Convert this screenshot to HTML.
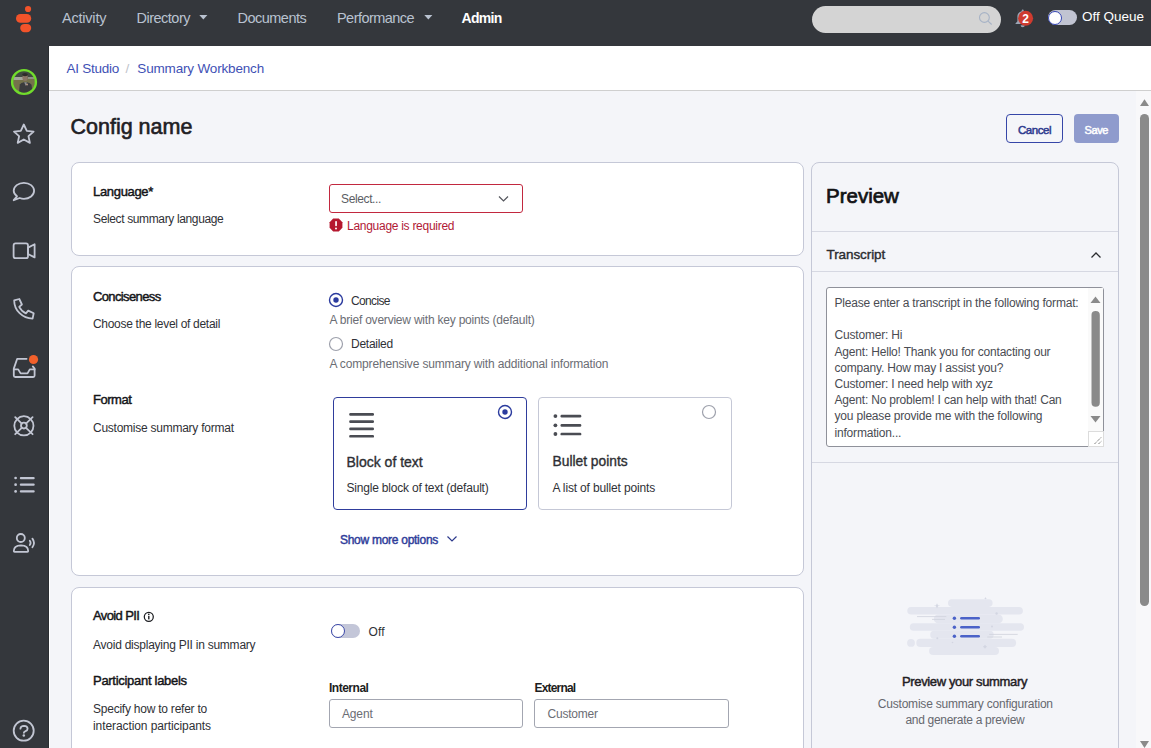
<!DOCTYPE html>
<html><head><meta charset="utf-8">
<style>
*{box-sizing:border-box;margin:0;padding:0}
html,body{width:1151px;height:748px;overflow:hidden;background:#f4f5f9;font-family:"Liberation Sans",sans-serif;color:#2e2f33}
.a{position:absolute}
.t{position:absolute;line-height:1;white-space:nowrap}
#nav{position:absolute;left:0;top:0;width:1151px;height:46px;background:#34373c}
#side{position:absolute;left:0;top:46px;width:49px;height:702px;background:#34373c}
#wcol{position:absolute;left:49px;top:91px;width:1px;height:657px;background:#fff}
.navt{position:absolute;top:11.2px;font-size:14px;color:#b9c2d0;line-height:14px;white-space:nowrap}
#crumb{position:absolute;left:49px;top:46px;width:1102px;height:45px;background:#fff;border-bottom:1px solid #cfcfcf}
.card{position:absolute;background:#fff;border:1px solid #c5c8d7;border-radius:8px}
.lbl{font-size:11.5px;font-weight:bold;color:#1d1e22}
.desc{font-size:11.5px;color:#2f3136}
.sub{font-size:11.5px;color:#6b6d74}
.radio{position:absolute;width:14px;height:14px;border-radius:50%;border:1px solid #8c8e96;background:#fff}
.radio.on{border:1.5px solid #2f3d9c}
.radio.on::after{content:"";position:absolute;left:2.5px;top:2.5px;width:6px;height:6px;border-radius:50%;background:#2f3d9c}
.inp{position:absolute;background:#fff;border:1px solid #a3a6b1;border-radius:3px}
</style></head><body>
<div id="nav">
  <svg class="a" style="left:0;top:0" width="49" height="46">
    <circle cx="28.05" cy="9" r="3.1" fill="#f2532a"/>
    <rect x="16" y="14" width="15.2" height="8.8" rx="4.4" fill="#f2532a"/>
    <rect x="20.2" y="23.9" width="11" height="8.3" rx="4.15" fill="#f2532a"/>
  </svg>
  <div class="navt" style="left:62px;font-size:14.5px;letter-spacing:-0.21px">Activity</div>
  <div class="navt" style="left:136.5px;font-size:14.5px;letter-spacing:-0.5px">Directory</div>
  <svg class="a" style="left:199px;top:14px" width="9" height="7"><path d="M0.3 1H8.4L4.35 5.6Z" fill="#b9c2d0"/></svg>
  <div class="navt" style="left:237.6px;font-size:14.5px;letter-spacing:-0.53px">Documents</div>
  <div class="navt" style="left:337px;font-size:14.5px;letter-spacing:-0.55px">Performance</div>
  <svg class="a" style="left:424px;top:14px" width="9" height="7"><path d="M0.3 1H8.4L4.35 5.6Z" fill="#b9c2d0"/></svg>
  <div class="navt" style="left:461.6px;color:#fff;font-weight:bold;font-size:14px;letter-spacing:-0.72px">Admin</div>

  <div class="a" style="left:812px;top:6px;width:189px;height:27px;border-radius:13.5px;background:#d4d4d4"></div>
  <svg class="a" style="left:975px;top:8px" width="22" height="22"><circle cx="9.4" cy="9.5" r="4.9" fill="none" stroke="#a7b3c6" stroke-width="1.1"/><path d="M13 13.2L16.7 16.5" stroke="#a7b3c6" stroke-width="1.1"/></svg>
  <svg class="a" style="left:1010px;top:6px" width="28" height="26">
    <path d="M5.2 18.1 L7.4 15.3 V11 A5.3 5.3 0 0 1 11.7 5.2 V4.6 A1 1 0 0 1 13.7 4.6 V5.2 A5.3 5.3 0 0 1 18 11 V15.3 L20.2 18.1 Z" fill="#9aa4b4"/>
    <path d="M10.6 19.2 A2.1 2.1 0 0 0 14.8 19.2 Z" fill="#9aa4b4"/>
    <circle cx="15.6" cy="12.3" r="7.5" fill="#cf3b2f"/>
    <text x="15.6" y="16.6" text-anchor="middle" font-family="Liberation Sans" font-weight="bold" font-size="12" fill="#fff">2</text>
  </svg>
  <div class="a" style="left:1048px;top:10px;width:29px;height:15px;border-radius:7.5px;background:#c1c4d2"></div>
  <div class="a" style="left:1047.5px;top:10.5px;width:14px;height:14px;border-radius:50%;background:#fff;border:1.5px solid #3646b4"></div>
  <div class="t" style="left:1082px;top:10.2px;font-size:13.5px;color:#fff">Off Queue</div>
</div>

<div id="side">
  <svg class="a" style="left:0;top:0" width="49" height="702">
    <defs><clipPath id="av"><circle cx="24" cy="36" r="11"/></clipPath></defs>
    <filter id="bl" x="-20%" y="-20%" width="140%" height="140%"><feGaussianBlur stdDeviation="0.6"/></filter>
    <g clip-path="url(#av)"><g filter="url(#bl)">
      <rect x="10" y="22" width="30" height="30" fill="#75724c"/>
      <rect x="10" y="22" width="30" height="10" fill="#3f4840"/>
      <rect x="10" y="31" width="16" height="3" fill="#a3a69c"/>
      <rect x="28" y="31" width="12" height="2" fill="#8e9284"/>
      <ellipse cx="25.1" cy="31.6" rx="2.7" ry="3.5" fill="#8a7566"/>
      <ellipse cx="25" cy="28.6" rx="2.9" ry="1.6" fill="#2e2c2a"/>
      <path d="M18.5 50 L19.8 38.5 Q21 36.6 24 36.2 L27 36.2 Q30.6 36.8 31.5 38.8 L33 50Z" fill="#3a3b3e"/>
      <path d="M24.2 36.3 L26.8 36.3 L25.8 40 Z" fill="#8f9194"/>
      <circle cx="27" cy="38.6" r="1" fill="#b89886"/>
    </g></g>
    <circle cx="24" cy="36" r="11.9" fill="none" stroke="#71dc2c" stroke-width="2.4"/>
    <g fill="none" stroke="#c2c6d3" stroke-width="1.8" stroke-linejoin="round" stroke-linecap="round">
      <!-- star -->
      <path d="M23.8 78.5 L26.8 84.9 L33.6 85.6 L28.5 90.2 L29.9 96.9 L23.8 93.5 L17.7 96.9 L19.1 90.2 L14 85.6 L20.8 84.9 Z"/>
      <!-- chat -->
      <path d="M17 150.3 C14.6 148.5 13.7 146.8 13.7 144.8 C13.7 140.4 18.3 136.8 23.9 136.8 C29.5 136.8 34.1 140.4 34.1 144.8 C34.1 149.2 29.5 152.8 23.9 152.8 C22.4 152.8 21 152.5 19.7 152 L13.7 154.2 Z"/>
      <!-- video -->
      <rect x="13.6" y="197.4" width="14.4" height="14.8" rx="2"/>
      <path d="M28 201.6 L34.6 198.2 V211.4 L28 208 Z"/>
      <!-- phone -->
      <path d="M14.2 254.4 L19.3 253 L21.9 258.5 L19.2 260.9 C20.6 263.6 23 266.1 25.9 267.4 L28.2 264.6 L33.7 267.2 L32.6 272.6 C22.5 272.4 14.2 264.4 14.2 254.4 Z"/>
      <!-- inbox -->
      <path d="M26.6 312.8 H17.2 L13.8 322.6 V329.6 Q13.8 331 15.2 331 H33.2 Q34.6 331 34.6 329.6 V322.6 L32.8 320.4"/>
      <path d="M13.8 323.4 H18.2 L20.6 327.4 H27.5 L29.8 323.4 H34.6"/>
      <!-- lifebuoy -->
      <circle cx="23.9" cy="379.8" r="9.6"/>
      <circle cx="23.9" cy="379.6" r="2.9"/>
      <path d="M15.2 371.2 L21.8 377.6 M32.6 371.2 L26 377.6 M15.2 388.2 L21.8 381.8 M32.6 388.2 L26 381.8"/>
      <!-- person voice -->
      <circle cx="20.8" cy="492" r="4"/>
      <path d="M13.8 505 Q13.8 499.4 21 499.3 Q28.2 499.4 28.2 505 Q28.2 505.8 27.4 505.8 H14.6 Q13.8 505.8 13.8 505 Z"/>
      <path d="M29.8 494.8 Q31.4 496.9 29.8 499 M32.4 492.6 Q35.6 496.9 32.4 501.3"/>
      <!-- help -->
      <circle cx="23.7" cy="684.7" r="10"/>
      <path d="M20.4 682.7 Q20.6 679.9 24 679.9 Q27.6 680 27.6 682.7 Q27.6 684.4 25.2 685.3 Q23.9 685.8 23.9 686.8"/>
    </g>
    <circle cx="23.8" cy="689.6" r="1.25" fill="#c2c6d3"/>
    <g fill="#c2c6d3">
      <circle cx="15.6" cy="432" r="1.35"/><circle cx="15.6" cy="438.7" r="1.35"/><circle cx="15.6" cy="445.4" r="1.35"/>
      <rect x="19.8" y="430.9" width="14.9" height="2.3" rx="1"/><rect x="19.8" y="437.55" width="14.9" height="2.3" rx="1"/><rect x="19.8" y="444.25" width="14.9" height="2.3" rx="1"/>
    </g>
    <circle cx="33.5" cy="313.5" r="4.6" fill="#f2602b"/>
  </svg>
  <div class="a" style="left:48px;top:0;width:1px;height:702px;background:#2b2e32"></div>
</div>

<div id="wcol"></div>
<div id="crumb">
  <div class="t" style="left:17.6px;top:15.9px;font-size:13.5px;letter-spacing:-0.25px;color:#3f51b5">AI Studio</div>
  <div class="t" style="left:76.5px;top:15.9px;font-size:13.5px;color:#c0c3cb">/</div>
  <div class="t" style="left:88.3px;top:15.9px;font-size:13.5px;letter-spacing:-0.165px;color:#3f51b5">Summary Workbench</div>
</div>

<div class="t" style="left:70.5px;top:117px;font-size:21.5px;color:#1f2024;-webkit-text-stroke:0.6px #1f2024">Config name</div>
<div class="a" style="left:1006px;top:114px;width:57px;height:29px;border:1px solid #3646a8;border-radius:4px"></div>
<div class="t" style="left:1017.9px;top:124.5px;font-size:11.5px;color:#2e3a8f;letter-spacing:-0.45px;-webkit-text-stroke:0.5px currentColor">Cancel</div>
<div class="a" style="left:1074px;top:114px;width:45px;height:29px;background:#8f9bcd;border-radius:4px"></div>
<div class="t" style="left:1084.5px;top:124.5px;font-size:11px;color:#fff;letter-spacing:-0.39px;-webkit-text-stroke:0.5px currentColor">Save</div>

<!-- card 1 -->
<div class="card" style="left:71px;top:162px;width:733px;height:94px"></div>
<div class="t" style="left:93px;top:184.9px;font-size:13px;color:#141518;letter-spacing:-0.322px;-webkit-text-stroke:0.45px currentColor">Language*</div>
<div class="t desc" style="left:93px;top:213.0px;font-size:12px;letter-spacing:-0.362px">Select summary language</div>
<div class="a" style="left:329px;top:184px;width:194px;height:28.5px;border:1.3px solid #c2283f;border-radius:3px;background:#fff"></div>
<div class="t" style="left:341px;top:193.1px;color:#5b5d64;font-size:12px;letter-spacing:-0.372px">Select...</div>
<svg class="a" style="left:498px;top:195px" width="12" height="8"><path d="M1 1.5L5.5 6L10 1.5" fill="none" stroke="#55575e" stroke-width="1.2"/></svg>
<svg class="a" style="left:329px;top:218px" width="15" height="15"><path d="M4.2 0.6H9.8L13.4 4.2V9.8L9.8 13.4H4.2L0.6 9.8V4.2Z" fill="#b5182f"/><rect x="6.2" y="3" width="1.7" height="5.2" rx="0.8" fill="#fff"/><circle cx="7" cy="10.4" r="1" fill="#fff"/></svg>
<div class="t" style="left:347px;top:219.8px;color:#b11a36;font-size:12px;letter-spacing:-0.277px">Language is required</div>

<!-- card 2 -->
<div class="card" style="left:71px;top:266px;width:733px;height:310px"></div>
<div class="t" style="left:93px;top:290.0px;font-size:13px;color:#141518;letter-spacing:-0.629px;-webkit-text-stroke:0.45px currentColor">Conciseness</div>
<div class="t desc" style="left:93px;top:318.4px;font-size:12px;letter-spacing:-0.298px">Choose the level of detail</div>
<svg class="a" style="left:328px;top:292.4px" width="16" height="16"><circle cx="8" cy="8" r="6.5" fill="#fff" stroke="#2b3b9e" stroke-width="1.4"/><circle cx="8" cy="8" r="2.7" fill="#2b3b9e"/></svg>
<div class="t desc" style="left:351px;top:294.8px;font-size:12px;letter-spacing:-0.650px">Concise</div>
<div class="t sub" style="left:329.5px;top:313.9px;font-size:12px;letter-spacing:-0.214px">A brief overview with key points (default)</div>
<svg class="a" style="left:328px;top:336px" width="16" height="16"><circle cx="8" cy="8" r="6.5" fill="#fff" stroke="#9ea1ac" stroke-width="1.2"/></svg>
<div class="t desc" style="left:351px;top:338.1px;font-size:12px;letter-spacing:-0.266px">Detailed</div>
<div class="t sub" style="left:329.5px;top:358.4px;font-size:12px;letter-spacing:-0.156px">A comprehensive summary with additional information</div>

<div class="t" style="left:93px;top:393.0px;font-size:13px;color:#141518;letter-spacing:-0.478px;-webkit-text-stroke:0.45px currentColor">Format</div>
<div class="t desc" style="left:93px;top:421.5px;font-size:12px;letter-spacing:-0.249px">Customise summary format</div>

<div class="a" style="left:333px;top:397px;width:194px;height:113px;border:1.5px solid #2f3d9c;border-radius:4px;background:#fff"></div>
<div class="a" style="left:538px;top:397px;width:194px;height:113px;border:1px solid #c5c8d6;border-radius:4px;background:#fff"></div>
<svg class="a" style="left:345px;top:408px" width="35" height="35" fill="#4a4c53">
  <rect x="4.2" y="5" width="24.8" height="2.7" rx="1.2"/><rect x="4.2" y="12.3" width="24.8" height="2.7" rx="1.2"/><rect x="4.2" y="19.6" width="24.8" height="2.7" rx="1.2"/><rect x="4.2" y="26.9" width="24.8" height="2.7" rx="1.2"/>
</svg>
<svg class="a" style="left:550px;top:408px" width="35" height="35" fill="#4a4c53">
  <circle cx="5.4" cy="8.1" r="1.9"/><circle cx="5.4" cy="17.3" r="1.9"/><circle cx="5.4" cy="26" r="1.9"/>
  <rect x="10.5" y="6.75" width="20.8" height="2.7" rx="1.2"/><rect x="10.5" y="15.95" width="20.8" height="2.7" rx="1.2"/><rect x="10.5" y="24.65" width="20.8" height="2.7" rx="1.2"/>
</svg>
<svg class="a" style="left:496.5px;top:404.4px" width="16" height="16"><circle cx="8" cy="8" r="6.5" fill="#fff" stroke="#2b3b9e" stroke-width="1.4"/><circle cx="8" cy="8" r="2.7" fill="#2b3b9e"/></svg>
<svg class="a" style="left:701.4px;top:404.4px" width="16" height="16"><circle cx="8" cy="8" r="6.5" fill="#fff" stroke="#9ea1ac" stroke-width="1.2"/></svg>
<div class="t" style="left:346.5px;top:455px;font-size:14px;color:#2e2f33;-webkit-text-stroke:0.35px #2e2f33">Block of text</div>
<div class="t desc" style="left:346.5px;top:482.4px;font-size:12px;letter-spacing:-0.202px">Single block of text (default)</div>
<div class="t" style="left:552.5px;top:455px;font-size:13.8px;color:#2e2f33;-webkit-text-stroke:0.35px #2e2f33">Bullet points</div>
<div class="t desc" style="left:552.5px;top:482.4px;font-size:12px;letter-spacing:-0.155px">A list of bullet points</div>

<div class="t" style="left:340px;top:533.5px;font-size:12px;color:#2f3d9a;letter-spacing:-0.277px;-webkit-text-stroke:0.45px currentColor">Show more options</div>
<svg class="a" style="left:446px;top:534px" width="13" height="10"><path d="M1.5 2.5L6 7L10.5 2.5" fill="none" stroke="#2d3a8c" stroke-width="1.2"/></svg>

<!-- card 3 -->
<div class="card" style="left:71px;top:587px;width:733px;height:200px"></div>
<div class="t" style="left:93px;top:609.2px;font-size:13px;color:#141518;letter-spacing:-0.61px;-webkit-text-stroke:0.45px currentColor">Avoid PII</div>
<svg class="a" style="left:142.5px;top:611.3px" width="13" height="13"><circle cx="5.8" cy="5.8" r="4.5" fill="none" stroke="#1d1e22" stroke-width="1.25"/><rect x="5.1" y="4.9" width="1.4" height="3.5" fill="#1d1e22"/><circle cx="5.8" cy="3.4" r="0.8" fill="#1d1e22"/></svg>
<div class="t desc" style="left:93px;top:638.7px;font-size:12px;letter-spacing:-0.243px">Avoid displaying PII in summary</div>
<div class="a" style="left:331px;top:624px;width:29px;height:14px;border-radius:7px;background:#c3c6d8"></div>
<div class="a" style="left:330.5px;top:624px;width:14px;height:14px;border-radius:50%;background:#fff;border:1.3px solid #3a47a8"></div>
<div class="t desc" style="left:368.5px;top:625.6px;font-size:12px;letter-spacing:0.172px">Off</div>
<div class="t" style="left:93px;top:674.4px;font-size:13px;color:#141518;letter-spacing:-0.288px;-webkit-text-stroke:0.45px currentColor">Participant labels</div>
<div class="t desc" style="left:93px;top:703.2px;font-size:12px;letter-spacing:-0.234px">Specify how to refer to</div>
<div class="t desc" style="left:93px;top:719.5px;font-size:12px;letter-spacing:-0.086px">interaction participants</div>
<div class="t" style="left:329px;top:682.2px;font-size:12px;font-weight:bold;color:#1d1e22;letter-spacing:-0.49px">Internal</div>
<div class="t" style="left:534.5px;top:682.2px;font-size:12px;font-weight:bold;color:#1d1e22;letter-spacing:-0.81px">External</div>
<div class="inp" style="left:329px;top:699px;width:194px;height:29px"></div>
<div class="inp" style="left:534px;top:699px;width:195px;height:29px"></div>
<div class="t" style="left:342px;top:708.3px;color:#6b6d74;font-size:12px;letter-spacing:-0.152px">Agent</div>
<div class="t" style="left:547.5px;top:708.3px;color:#6b6d74;font-size:12px;letter-spacing:-0.226px">Customer</div>

<!-- preview -->
<div class="a" style="left:811px;top:162px;width:308px;height:640px;border:1px solid #c5c8d7;border-radius:8px"></div>
<div class="t" style="left:826px;top:186px;font-size:20.5px;color:#111214;-webkit-text-stroke:0.7px #111214">Preview</div>
<div class="a" style="left:812px;top:231px;width:306px;height:1px;background:#d6d8e2"></div>
<div class="t" style="left:826.5px;top:247.8px;font-size:13.5px;color:#2b2c30;letter-spacing:-0.081px;-webkit-text-stroke:0.4px currentColor">Transcript</div>
<svg class="a" style="left:1088px;top:249px" width="16" height="12"><path d="M3.5 8.5L8 4L12.5 8.5" fill="none" stroke="#2b2c30" stroke-width="1.3"/></svg>
<div class="a" style="left:812px;top:271px;width:306px;height:1px;background:#d6d8e2"></div>
<div class="a" style="left:826px;top:287px;width:278px;height:160px;border:1px solid #8f919a;border-radius:3px;background:#fff"></div>
<div class="a" style="left:834.5px;top:295px;font-size:12px;letter-spacing:-0.19px;line-height:16.2px;color:#4a4c53;white-space:pre">Please enter a transcript in the following format:

Customer: Hi
Agent: Hello! Thank you for contacting our
company. How may I assist you?
Customer: I need help with xyz
Agent: No problem! I can help with that! Can
you please provide me with the following
information...</div>
<div class="a" style="left:1088px;top:288px;width:15px;height:158px;background:#fafafa"></div>
<svg class="a" style="left:1088px;top:290px" width="16" height="157">
  <path d="M2.5 13 L7.5 6.5 L12.5 13Z" fill="#8a8a8a"/>
  <rect x="3.5" y="21" width="8.3" height="95.8" rx="4.1" fill="#8a8a8a"/>
  <path d="M2.5 126 L12.5 126 L7.5 132.5Z" fill="#8a8a8a"/>
  <rect x="0.5" y="141.5" width="15" height="15" fill="#fff" stroke="#dcdcdc" stroke-width="1"/>
  <path d="M6.5 154 L13.5 147 M10.5 154 L13.5 151" stroke="#555" stroke-width="0.9" stroke-dasharray="1.2 0.8"/>
</svg>
<div class="a" style="left:812px;top:462px;width:306px;height:1px;background:#d6d8e2"></div>

<svg class="a" style="left:905px;top:596px" width="122" height="62">
  <g fill="#e4e6ef">
    <rect x="43" y="3.3" width="44.6" height="7.6" rx="3.8"/>
    <rect x="2.3" y="10.9" width="115.6" height="7.6" rx="3.8"/>
    <rect x="28.8" y="18.4" width="69" height="9" rx="4.5"/>
    <rect x="4.8" y="27.2" width="114.2" height="7.6" rx="3.8"/>
    <rect x="25.2" y="34.7" width="63.5" height="8.1" rx="4"/>
    <circle cx="6" cy="46.9" r="3.9"/>
    <rect x="11.3" y="42.8" width="99.8" height="8.2" rx="4.1"/>
    <rect x="24.1" y="51" width="69.9" height="8" rx="4"/>
  </g>
  <g stroke="#cfd2dc" stroke-width="0.8"><path d="M12 20.6H41.3 M27 23.4H40 M84.2 38.4H112.7 M82.3 41H97"/></g>
  <g fill="#d3d6e2">
    <path d="M32 7.2 L33 9.4 L35.2 9.6 L33 10.2 L32 12.4 L31 10.2 L28.8 9.6 L31 9.4Z"/>
    <path d="M80.5 1.2 L81.1 2.1 L82.1 2.3 L81.1 2.6 L80.5 3.6 L79.9 2.6 L78.9 2.3 L79.9 2.1Z"/>
    <path d="M80 48.8 L81 50 L82.2 50.8 L81 51.6 L80 52.8 L79 51.6 L77.8 50.8 L79 50Z"/>
    <circle cx="91.6" cy="17.5" r="1.2"/><circle cx="87" cy="30.4" r="1"/><circle cx="32.3" cy="42.3" r="1"/><circle cx="47.5" cy="46.5" r="0.8"/>
  </g>
  <g fill="#4b62c8">
    <circle cx="49.4" cy="22.2" r="1.7"/><circle cx="49.4" cy="31.2" r="1.7"/><circle cx="49.4" cy="40.3" r="1.7"/>
    <rect x="55.1" y="20.95" width="19.9" height="2.5" rx="1.25"/><rect x="55.1" y="29.95" width="19.9" height="2.5" rx="1.25"/><rect x="55.1" y="39.05" width="19.9" height="2.5" rx="1.25"/>
  </g>
</svg>
<div class="t" style="left:902px;top:675px;font-size:13px;color:#1f2024;letter-spacing:-0.359px;-webkit-text-stroke:0.45px currentColor">Preview your summary</div>
<div class="t" style="left:877.8px;top:698.2px;color:#66686f;font-size:12px;letter-spacing:-0.206px">Customise summary configuration</div>
<div class="t" style="left:905.4px;top:714.1px;color:#66686f;font-size:12px;letter-spacing:-0.291px">and generate a preview</div>

<!-- page scrollbar -->
<div class="a" style="left:1136px;top:91px;width:15px;height:657px;background:#f8f8fa"></div>
<svg class="a" style="left:1136px;top:91px" width="15" height="657">
  <path d="M4 15 L8.5 8.3 L13 15Z" fill="#8a8a8a"/>
  <rect x="4" y="23" width="9" height="492" rx="4.5" fill="#8a8a8a"/>
  <path d="M4 650 L13 650 L8.5 657Z" fill="#8a8a8a"/>
</svg>
</body></html>
